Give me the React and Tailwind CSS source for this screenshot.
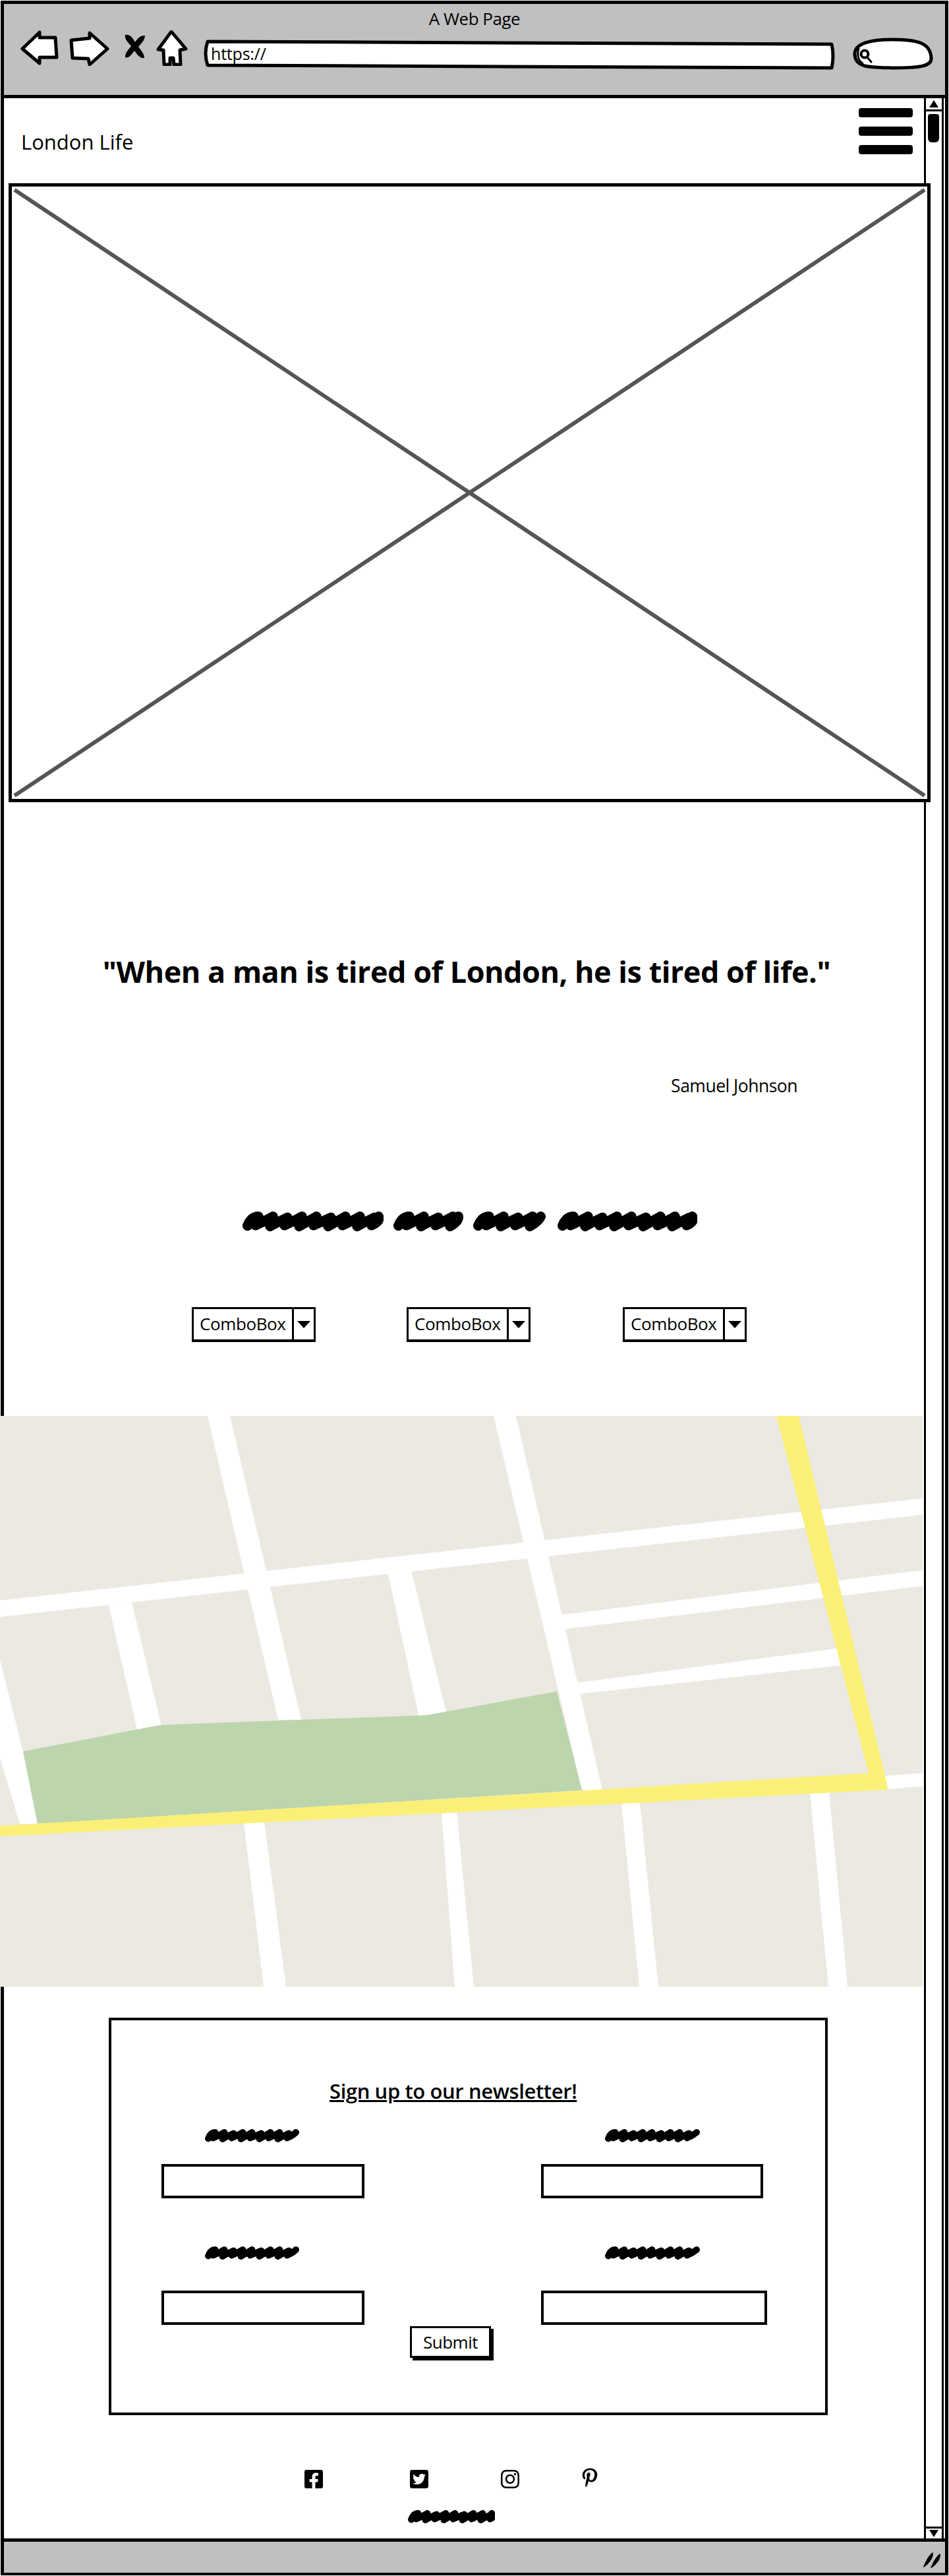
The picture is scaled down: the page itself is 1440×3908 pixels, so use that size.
import React from "react";
import { FaFacebookSquare, FaTwitterSquare, FaInstagram, FaPinterestP } from "react-icons/fa";

function Scribble({ w, h = 20, sw = 10, period = 14 }) {
  let d = `M${sw / 2} ${h * 0.72}Q${period * 0.6} ${sw / 2} ${period * 1.1} ${sw / 2}`;
  let i = 0;
  for (let x = period * 0.9; x < w - sw / 2 - 2; x += period, i++) {
    const top = sw / 2 + (i % 3 === 1 ? 1.5 : 0);
    const bottom = h - sw / 2 - (i % 2 ? 0 : 1.5);
    d += ` Q${x + period * 0.1} ${h / 2} ${x} ${bottom} Q${x + period * 0.6} ${h / 2} ${Math.min(x + period * 1.2, w - sw / 2)} ${top}`;
  }
  return (
    <svg width={w} height={h} viewBox={`0 0 ${w} ${h}`} className="block shrink-0">
      <path d={d} fill="none" stroke="#000" strokeWidth={sw} strokeLinecap="round" strokeLinejoin="round" />
    </svg>
  );
}

function Combo({ className }) {
  return (
    <div className={`flex h-[53px] w-[188px] shrink-0 border-[3px] border-b-4 border-black bg-white ${className}`}>
      <div className="w-[149px] whitespace-nowrap pl-[9px] text-[26px] leading-[44px] tracking-[-0.4px]">ComboBox</div>
      <div className="flex flex-1 items-center justify-center border-l-[3px] border-black">
        <svg width="20" height="11" viewBox="0 0 20 11"><path d="M0 0H20L10 11Z" fill="#000" /></svg>
      </div>
    </div>
  );
}

function MapArt() {
  const roads = [
    "0,280 1400,125 1400,150 0,305",
    "315,0 349,0 457,461 422,461",
    "749,0 783,0 914,568 883,568",
    "588,235 623,230 678,454 636,458",
    "165,287 200,283 246,475 209,480",
    "0,370 35,509 57,619 30,619 0,519",
    "835,304 1400,234 1400,258 835,326",
    "860,407 1290,350 1290,377 860,424",
    "1330,547 1400,542 1400,562 1330,568",
    "370,617 401,615 434,866 400,866",
    "670,603 693,601 719,866 690,866",
    "943,588 971,586 999,866 970,866",
    "1229,572 1258,570 1286,866 1257,866",
  ];
  return (
    <svg viewBox="0 0 1400 866" width="1400" height="866" className="block">
      <rect width="1400" height="866" fill="#ebe9e2" />
      {roads.map((p) => (
        <polygon key={p} points={p} fill="#fff" />
      ))}
      <polygon points="35,509 243,469 647,454 845,418 883,568 57,619" fill="#bdd5ad" />
      <polygon points="1178,0 1212,0 1348,567 0,638 0,622 1318,542" fill="#fbf077" />
    </svg>
  );
}

export default function App() {
  return (
    <div className="relative h-[3908px] w-[1440px] overflow-hidden bg-white font-['Open_Sans',sans-serif] text-black">
      <div className="ml-px mt-px flex h-[3906px] w-[1438px] flex-col border-[5px] border-b-4 border-black">
        <header className="h-[143px] shrink-0 border-b-[5px] border-black bg-[#c0c0c0]">
          <div className="h-[40px] pt-[6px] text-center text-[26px] leading-[32px] tracking-[-0.5px]">A Web Page</div>
          <div className="flex items-start pl-[25px]">
            <svg viewBox="30 46 58 54" width="58" height="54" className="shrink-0">
              <path d="M33 74 59 49V57H83L85 87H59V96Z" fill="#fff" stroke="#000" strokeWidth="5" strokeLinejoin="round" />
            </svg>
            <svg viewBox="104 46 61 54" width="61" height="54" className="ml-[16px] shrink-0">
              <path d="M107 61 135 58V50L162 74 135 98 133 89 109 88Z" fill="#fff" stroke="#000" strokeWidth="5" strokeLinejoin="round" />
            </svg>
            <svg viewBox="186 50 35 41" width="35" height="41" className="ml-[21px] mt-[4px] shrink-0">
              <path d="M189 53C197 51 202 60 204 64 207 59 212 53 219 54 219 61 212 67 209 71 213 76 218 82 218 88 211 89 206 81 203 77 200 81 195 89 189 87 188 81 195 74 198 70 194 65 188 60 189 53Z" fill="#000" />
            </svg>
            <svg viewBox="236 46 48 54" width="48" height="54" className="ml-[15px] shrink-0">
              <path d="M259 48 281 74 272 76 273 98H263L262 88H257L257 98H248L247 76 239 75Z" fill="#fff" stroke="#000" strokeWidth="5" strokeLinejoin="round" />
            </svg>
            <div className="relative ml-[22px] mt-[13px] h-[48px] w-[960px] shrink-0">
              <svg viewBox="306 59 960 48" width="960" height="48" className="absolute inset-0">
                <path d="M314 63 1261 67Q1265 85 1261 103L314 99Q308 81 314 63Z" fill="#fff" stroke="#000" strokeWidth="5" strokeLinejoin="round" />
              </svg>
              <span className="relative block pl-[13px] pt-[7px] text-[25px] leading-[30px] tracking-[-0.2px]">https://</span>
            </div>
            <svg viewBox="1294 56 122 52" width="122" height="52" className="ml-[27px] mt-[10px] shrink-0">
              <path d="M1297 83C1296 66 1320 60 1354 60 1390 60 1412 64 1413 88 1414 101 1394 103 1354 103 1320 102 1298 103 1297 83Z" fill="#fff" stroke="#000" strokeWidth="5" />
              <circle cx="1312" cy="82" r="5.5" fill="none" stroke="#000" strokeWidth="4" />
              <path d="M1316 87 1322 94M1303 74C1300 82 1302 92 1309 96" fill="none" stroke="#000" strokeWidth="3" strokeLinecap="round" />
            </svg>
          </div>
        </header>

        <main className="relative min-h-0 flex-1">
          <div className="absolute bottom-[-3px] right-[2px] top-0 flex w-[30px] flex-col justify-between border-x-[3px] border-black">
            <div className="flex h-[20px] items-center justify-center border-b-[3px] border-black">
              <svg width="14" height="11" viewBox="0 0 14 11"><path d="M7 0 14 11H0Z" fill="#000" /></svg>
            </div>
            <div className="absolute left-[3px] top-[24px] h-[43px] w-[17px] rounded-b-md rounded-t-sm bg-black" />
            <div className="flex h-[21px] items-center justify-center border-y-[3px] border-black">
              <svg width="14" height="11" viewBox="0 0 14 11"><path d="M0 0H14L7 11Z" fill="#000" /></svg>
            </div>
          </div>

          <div className="flex h-[129px] items-start justify-between">
            <div className="pl-[26px] pt-[46px] text-[31px] leading-[40px]">London Life</div>
            <div className="mr-[49px] flex w-[82px] flex-col gap-[14px] pt-[15px]">
              <div className="h-[14px] rounded-sm bg-black" />
              <div className="h-[14px] rounded-sm bg-black" />
              <div className="h-[14px] rounded-sm bg-black" />
            </div>
          </div>

          <div className="relative z-10 ml-[7px] h-[939px] w-[1399px] border-[5px] border-black bg-white">
            <svg viewBox="0 0 1389 929" className="absolute inset-0 h-full w-full">
              <path d="M4 5 1385 924M4 924 1385 5" stroke="#555" strokeWidth="6" fill="none" />
            </svg>
          </div>

          <div className="mt-[227px] pr-[24px] text-center text-[45px] font-bold leading-[60px] tracking-[-0.5px]">"When a man is tired of London, he is tired of life."</div>
          <div className="mt-[128px] pr-[224px] text-right text-[26.5px] leading-[30px] tracking-[-0.5px]">Samuel Johnson</div>

          <div className="ml-[362px] mt-[176px] flex">
            <Scribble w={214} h={30} sw={15} period={22} />
            <div className="ml-[15px]"><Scribble w={106} h={30} sw={15} period={22} /></div>
            <div className="ml-[15px]"><Scribble w={110} h={30} sw={15} period={22} /></div>
            <div className="ml-[18px]"><Scribble w={212} h={30} sw={15} period={22} /></div>
          </div>

          <div className="ml-[285px] mt-[115px] flex">
            <Combo className="" />
            <Combo className="ml-[138px]" />
            <Combo className="ml-[140px]" />
          </div>

          <div className="relative z-10 -ml-[6px] mt-[112px] h-[866px] w-[1400px]">
            <MapArt />
          </div>

          <section className="relative z-10 ml-[159px] mt-[47px] h-[603px] w-[1091px] border-4 border-black bg-white pt-[89px]">
            <h2 className="ml-[331px] w-fit whitespace-nowrap text-[31px] font-semibold leading-[36px] tracking-[-0.4px] underline">Sign up to our newsletter!</h2>
            <div className="ml-[76px] mt-[40px] flex">
              <div className="w-[576px]">
                <div className="ml-[66px]"><Scribble w={143} /></div>
                <div className="mt-[33px] h-[52px] w-[308px] border-4 border-black bg-white" />
              </div>
              <div>
                <div className="ml-[97px]"><Scribble w={144} /></div>
                <div className="mt-[33px] h-[52px] w-[337px] border-4 border-black bg-white" />
              </div>
            </div>
            <div className="ml-[76px] mt-[73px] flex">
              <div className="w-[576px]">
                <div className="ml-[66px]"><Scribble w={143} /></div>
                <div className="mt-[47px] h-[52px] w-[308px] border-4 border-black bg-white" />
              </div>
              <div>
                <div className="ml-[97px]"><Scribble w={144} /></div>
                <div className="mt-[47px] h-[52px] w-[343px] border-4 border-black bg-white" />
              </div>
            </div>
            <button className="ml-[453px] mt-[2px] flex h-[48px] w-[123px] items-center justify-center border-[3px] border-black bg-white text-[26px] leading-[30px] tracking-[-0.5px] shadow-[4px_4px_0_#000]">Submit</button>
          </section>

          <div className="ml-[456px] mt-[80px] flex h-[30px] items-start">
            <FaFacebookSquare className="mt-px h-[32px] w-[28px] shrink-0" />
            <FaTwitterSquare className="ml-[132px] mt-px h-[32px] w-[28px] shrink-0" />
            <FaInstagram className="ml-[110px] mt-px h-[32px] w-[28px] shrink-0" />
            <FaPinterestP className="ml-[95px] h-[30px] w-[24px] shrink-0" />
          </div>
          <div className="ml-[613px] mt-[34px]"><Scribble w={132} /></div>
        </main>

        <footer className="relative h-[52px] shrink-0 border-t-[5px] border-black bg-[#c0c0c0]">
          <svg viewBox="0 0 30 26" width="30" height="26" className="absolute bottom-[7px] right-[5px]">
            <path d="M3 24C6 16 11 7 16 3 17 10 10 19 3 24ZM14 25C17 18 22 9 27 5 28 12 21 21 14 25Z" fill="#000" stroke="#000" strokeWidth="1.5" strokeLinejoin="round" />
          </svg>
        </footer>
      </div>
    </div>
  );
}
